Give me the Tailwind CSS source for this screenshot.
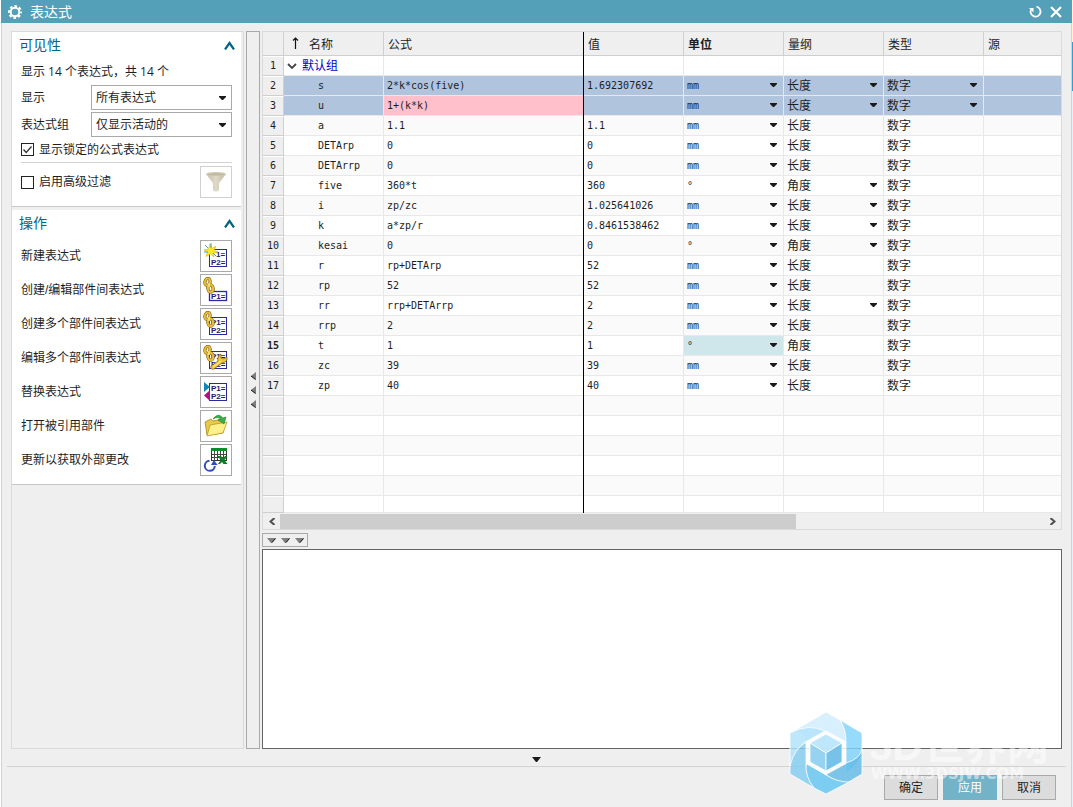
<!DOCTYPE html>
<html lang="zh-CN">
<head>
<meta charset="utf-8">
<title>表达式</title>
<script src="https://cdn.jsdelivr.net/npm/@tailwindcss/browser@4"></script>
</head>
<body class="bg-white font-['Liberation_Sans','Noto_Sans_CJK_SC',sans-serif] text-xs text-[#1e1e1e]">
<svg class="hidden">
  <defs>
    <symbol id="caret" viewBox="0 0 9 5"><path d="M1 0H8V1L5 4H4L1 1Z" fill="#1a1a1a"/></symbol>
    <symbol id="up" viewBox="0 0 11 9"><path d="M1 8.500 5.500 2 10 8.500" fill="none" stroke="#006684" stroke-width="2.200"/></symbol>
    <symbol id="gray-left" viewBox="0 0 5 8"><path d="M5 0V8L0 4Z" fill="#7d7d7d"/><path d="M0 4 4.500 7.500" fill="none" stroke="#111"/></symbol>
    <symbol id="gray-down" viewBox="0 0 9 5"><path d="M0 0H9L5 5H4Z" fill="#808080"/><path d="M8.500 .5 5 4.500" stroke="#111"/></symbol>
    <symbol id="chain" viewBox="0 0 12 17">
      <g fill="none" stroke="#7a5a00" stroke-width="3.200"><ellipse cx="4.500" cy="5" rx="2.500" ry="3.600" transform="rotate(14 4.500 5)"/><ellipse cx="7.500" cy="11.500" rx="2.600" ry="3.700" transform="rotate(-8 7.500 11.500)"/></g>
      <g fill="none" stroke="#e8bd3c" stroke-width="2"><ellipse cx="4.500" cy="5" rx="2.500" ry="3.600" transform="rotate(14 4.500 5)"/><ellipse cx="7.500" cy="11.500" rx="2.600" ry="3.700" transform="rotate(-8 7.500 11.500)"/></g>
      <path d="M6 6V10" stroke="#fae68c" stroke-width="1.500"/>
    </symbol>
  </defs>
</svg>

<div class="flex min-h-screen">
  <div class="w-px shrink-0 bg-white"></div>
  <div class="relative flex min-w-0 flex-1 flex-col border-x border-[#d2d2d2] bg-[#efefef]">
    <header class="-mx-px flex h-[23px] shrink-0 items-center bg-[#54a0b8] pl-1.5 pr-2.5 text-white">
      <svg class="mr-[7px] size-4" viewBox="0 0 16 16"><circle cx="8" cy="8" r="4.300" fill="none" stroke="#fff" stroke-width="2"/><circle cx="8" cy="8" r="6" fill="none" stroke="#fff" stroke-width="2" stroke-dasharray="2.700 2.012" stroke-dashoffset="1.350"/></svg>
      <h1 class="flex-1 text-sm">表达式</h1>
      <button aria-label="重置" class="mr-2"><svg class="size-[13px]" viewBox="0 0 13 13"><path d="M7.500 1.700A5 5 0 1 1 1.800 5" fill="none" stroke="#fff" stroke-width="1.800"/><path d="M0 3H4.500V7.500Z" fill="#fff"/></svg></button>
      <button aria-label="关闭"><svg class="size-3" viewBox="0 0 12 12"><path d="M1 1 11 11M11 1 1 11" stroke="#fff" stroke-width="2.200"/></svg></button>
    </header>

    <main class="flex flex-1 pl-[9px] pr-[9px] pt-2">
      <aside class="mr-0.5 w-[233px] shrink-0 border border-[#dadada]">
        <section class="mr-0.5 border-b border-[#c8c8c8] bg-white pb-2 pl-[9px] pr-[9px]">
          <div class="-ml-0.5 -mr-1 flex h-7 items-start justify-between pt-[3px] text-sm text-[#006684]"><h2>可见性</h2><button aria-label="折叠可见性" class="mr-px mt-1.5"><svg class="h-[9px] w-[11px]"><use href="#up"/></svg></button></div>
          <p class="flex h-6 items-center font-['Open_Sans','Noto_Sans_CJK_SC',sans-serif]">显示 14 个表达式，共 14 个</p>
          <div class="mt-px flex items-center">
            <label for="show" class="w-[70px]">显示</label>
            <div class="relative flex-1"><select id="show" class="block h-[25px] w-full appearance-none border border-[#a9a9a9] bg-white pl-1"><option>所有表达式</option></select><svg class="pointer-events-none absolute right-[5px] top-[11px] h-[5px] w-[9px]"><use href="#caret"/></svg></div>
          </div>
          <div class="mt-0.5 flex items-center">
            <label for="grp" class="w-[70px]">表达式组</label>
            <div class="relative flex-1"><select id="grp" class="block h-[25px] w-full appearance-none border border-[#a9a9a9] bg-white pl-1"><option>仅显示活动的</option></select><svg class="pointer-events-none absolute right-[5px] top-[11px] h-[5px] w-[9px]"><use href="#caret"/></svg></div>
          </div>
          <label class="flex h-[26px] items-center gap-[5px] border-b border-[#d2d2d2]">
            <span class="grid"><input type="checkbox" checked class="peer col-start-1 row-start-1 size-[13px] appearance-none border border-[#222]"><svg class="invisible pointer-events-none col-start-1 row-start-1 size-[13px] peer-checked:visible" viewBox="0 0 13 13"><path d="M2.500 6.500 5.200 9.500 10.500 3.500" fill="none" stroke="#333" stroke-width="1.300"/></svg></span>显示锁定的公式表达式</label>
          <div class="mt-[3px] flex items-center justify-between">
            <label class="flex items-center gap-[5px]"><input type="checkbox" class="size-[13px] appearance-none border border-[#222]">启用高级过滤</label>
            <button aria-label="高级过滤" class="border border-[#d0d0d0]"><svg class="size-[30px]" viewBox="0 0 30 30"><defs><linearGradient id="fn"><stop stop-color="#c5bda5"/><stop offset=".5" stop-color="#dfd9c8"/><stop offset="1" stop-color="#bdb69f"/></linearGradient></defs><path d="M5 7 12 16V23Q15 26 18 23V16L25 7Z" fill="url(#fn)"/><ellipse cx="15" cy="7" rx="10" ry="2" fill="#d0c9b3"/><ellipse cx="15" cy="7.200" rx="8" ry="1" fill="#bfb8a2"/></svg></button>
          </div>
        </section>
        <section class="mr-0.5 mt-[3px] border-b border-[#c8c8c8] bg-white pb-2 pl-[9px] pr-[9px]">
          <div class="-ml-0.5 -mr-1 mb-0.5 flex h-7 items-start justify-between pt-[3px] text-sm text-[#006684]"><h2>操作</h2><button aria-label="折叠操作" class="mr-px mt-1.5"><svg class="h-[9px] w-[11px]"><use href="#up"/></svg></button></div>
          <div id="ops" class="flex flex-col gap-0.5"></div>
        </section>
      </aside>

      <button aria-label="折叠面板" class="mr-0.5 flex w-3.5 shrink-0 flex-col items-center justify-center gap-1.5 border border-[#a9a9a9]">
        <svg class="h-2 w-[5px]"><use href="#gray-left"/></svg><svg class="h-2 w-[5px]"><use href="#gray-left"/></svg><svg class="h-2 w-[5px]"><use href="#gray-left"/></svg>
      </button>

      <div class="flex min-w-0 flex-1 flex-col">
        <div class="border border-[#dadada]">
          <table class="w-full table-fixed border-separate border-spacing-0 font-['DejaVu_Sans_Mono','Noto_Sans_CJK_SC',monospace] text-[10px] leading-4">
            <colgroup><col class="w-[21px]"><col class="w-[100px]"><col class="w-[200px]"><col class="w-[100px]"><col class="w-[100px]"><col class="w-[100px]"><col class="w-[100px]"><col></colgroup>
            <thead>
              <tr class="h-6 bg-[#efefef] text-left text-xs [&>th]:border-b [&>th]:border-r [&>th]:border-[#cfcfcf] [&>th]:p-0 [&>th]:pl-1 [&>th]:pt-0.5 [&>th]:font-normal">
                <th></th>
                <th><span class="flex items-center pl-1"><svg class="mb-1 mr-2.5 h-3 w-[7px]" viewBox="0 0 7 12"><path d="M3.500 12V1.500M1 3.500 3.500 1 6 3.500" fill="none" stroke="#111" stroke-width="1.200"/></svg>名称</span></th>
                <th class="relative after:absolute after:-right-px after:-bottom-px after:top-0 after:w-px after:bg-black">公式</th><th>值</th><th class="font-bold!">单位</th><th>量纲</th><th>类型</th><th class="border-r-0!">源</th>
              </tr>
            </thead>
            <tbody id="rows"></tbody>
          </table>
          <div class="flex h-4 items-center">
            <button aria-label="向左滚动" class="flex w-[17px] justify-center"><svg class="h-[7px] w-[6px]" viewBox="0 0 6 7"><path d="M5.500 0 1.500 3.500 5.500 7" fill="none" stroke="#505050" stroke-width="2"/></svg></button>
            <div class="h-full flex-1"><div class="mt-px h-[15px] w-[67.500%] bg-[#cdcdcd]"></div></div>
            <button aria-label="向右滚动" class="flex w-[17px] justify-center"><svg class="h-[7px] w-[6px]" viewBox="0 0 6 7"><path d="M.5 0 4.500 3.500 .5 7" fill="none" stroke="#505050" stroke-width="2"/></svg></button>
          </div>
        </div>
        <button aria-label="展开编辑区" class="mb-0.5 mt-[3px] flex h-3.5 w-[46px] shrink-0 items-center justify-center gap-[5px] border border-[#a9a9a9]">
          <svg class="h-[5px] w-[9px]"><use href="#gray-down"/></svg><svg class="h-[5px] w-[9px]"><use href="#gray-down"/></svg><svg class="h-[5px] w-[9px]"><use href="#gray-down"/></svg>
        </button>
        <textarea aria-label="公式编辑" class="block min-h-40 w-full flex-1 resize-none border border-[#646464] bg-white"></textarea>
      </div>
    </main>

    <footer class="px-[5px]">
      <button aria-label="更多选项" class="flex h-[17px] w-full items-center justify-center pt-1"><svg class="h-[5px] w-[9px]" viewBox="0 0 9 5"><path d="M0 0H9L5 5H4Z" fill="#1a1a1a"/></svg></button>
      <div class="flex justify-end gap-[5px] border-t border-[#d2d2d2] pb-[7px] pr-2.5 pt-2">
        <button class="h-[25px] w-[54px] border border-[#a9a9a9] bg-[#dcdcdc]">确定</button>
        <button class="h-[25px] w-[54px] bg-[#72b3c8] text-white">应用</button>
        <button class="h-[25px] w-[54px] border border-[#a9a9a9] bg-[#dcdcdc]">取消</button>
      </div>
    </footer>

    <svg class="pointer-events-none absolute bottom-3 right-5 h-[84px] w-[264px]" viewBox="0 0 264 84" aria-hidden="true">
      <g stroke="#fff" stroke-opacity=".8" fill-opacity=".82">
        <path d="M3 22 39 1 53 9Q59 18 59 31L39 20 20 31Q15 18 3 22Z" fill="#d0edfc"/>
        <path d="M53 9 75 22V40Q73 54 59 62V31Q59 18 53 9Z" fill="#7fd3fa"/>
        <path d="M75 38V63L60 72Q47 70 38 63L59 52Q73 48 75 38Z" fill="#63bce8"/>
        <path d="M62 71 39 83 27 77Q17 66 19 52L39 64Q50 71 62 71Z" fill="#64c6f3"/>
        <path d="M27 77 3 63V52Q6 38 19 31V52Q18 66 27 77Z" fill="#82cdf1"/>
        <path d="M3 55V22Q22 12 38 20L20 30Q7 38 3 55Z" fill="#b1e2fa"/>
        <path d="M39 20 59 31V53L39 64 19 53V31Z" fill="#fff" stroke="none"/>
        <path d="M39 23 55 32 39 42 23 32Z" fill="#b1e2fa"/><path d="M23 32 39 42V60L23 51Z" fill="#7ec9ed"/><path d="M55 32 39 42V60L55 51Z" fill="#58b5e4"/>
      </g>
      <g fill="#fff" fill-opacity=".5" font-weight="bold">
        <text x="82" y="49" font-size="42" font-family="Liberation Sans, Noto Sans CJK SC, sans-serif">3D世界网</text>
        <text x="84" y="68" font-size="15" font-family="DejaVu Sans, sans-serif">WWW.3DSJW.COM</text>
      </g>
    </svg>
  </div>
  <div class="flex w-px shrink-0 flex-col"><div class="h-[42px] bg-[#fdf3d0]"></div><div class="h-[49px] bg-[#2a9fd8]"></div><div class="flex-1 bg-[#e6f2fa]"></div></div>
</div>

<script>
const box = '<rect x="9.500" y="9.500" width="17" height="17" fill="#fff" stroke="#2a2aa0"/>';
const txt = (x, y, t) => `<text x="${x}" y="${y}" font-size="8" font-weight="bold" fill="#20206e" font-family="Liberation Sans, sans-serif">${t}</text>`;
const chain = '<use href="#chain" x="3" y="3" width="12" height="17"/>';
const ops = [
  ['新建表达式', box + txt(16, 17, '1=') + txt(11, 25, 'P2=') +
    '<path d="M10 4 12 8.500 16 6 14 10.500 18 12 13.500 13 14 17 10.500 14 6 16.500 7.500 12 4 10 8.500 9Z" fill="#ffe91f" stroke="#d0b400" stroke-width=".6"/><path d="M5 5 8 8M11 3V8M16 16 13 13M4 12H8" stroke="#3ba7c9"/>'],
  ['创建/编辑部件间表达式', '<rect x="9.500" y="17.500" width="17" height="9" fill="#fff" stroke="#2a2aa0" stroke-width="1.300"/>' + txt(11, 25, 'P1=') + chain],
  ['创建多个部件间表达式', box + txt(11, 17, 'P1=') + txt(11, 25, 'P2=') + chain],
  ['编辑多个部件间表达式', box + txt(11, 17, 'P1=') + txt(11, 25, 'P2=') + chain +
    '<path d="M11 24 18 19Q17 14 21 12V16L24 17 27 15Q28 20 22 21L14 27Q10 28 11 24Z" fill="#f2c840" stroke="#8a6508" stroke-width=".8"/><path d="M13 25 21 19" stroke="#fff0a0"/>'],
  ['替换表达式', '<rect x="9.500" y="7.500" width="17" height="17" fill="#fff" stroke="#2a2aa0"/>' + txt(11, 15, 'P1=') + txt(11, 23, 'P2=') +
    '<path d="M4 6 10 11 4 16Z" fill="#1287b5"/><path d="M10 14V25L4 19.500Z" fill="#b0108a"/>'],
  ['打开被引用部件', '<path d="M5 12 11 9 13 11 23 9V23L7 25Z" fill="#e8c94a" stroke="#a88612" stroke-width=".8"/><path d="M10 15 27 12 23 23 7 26Z" fill="#fff08a" stroke="#b89a20" stroke-width=".8"/><path d="M13 9Q18 2 23 8L26 7 24 14 18 10 20.500 9Q18 6 13 9Z" fill="#3fae49" stroke="#1d7a2c" stroke-width=".6"/>'],
  ['更新以获取外部更改', '<rect x="11.500" y="5.500" width="15" height="11" fill="#fff" stroke="#333"/><path d="M14.500 6V16M17.500 6V16M20.500 6V16M23.500 6V16M12 10.500H26M12 13.500H26" stroke="#444"/><path d="M11 4H27V7H11Z" fill="#118a22"/><path d="M17 12H21L23 14.500 25 12H27V13L24.500 16 27.500 20H23.500L22 18 20 20H18L21 16Z" fill="#0d7c24"/><path d="M9.500 16.800A5 5 0 1 0 14.800 22" fill="none" stroke="#2f4fb4" stroke-width="2"/><path d="M11 21 14 16 17.500 21Z" fill="#2f4fb4"/>']
];
document.getElementById('ops').innerHTML = ops.map(([n, g], i) =>
  `<div class="flex items-center justify-between"><label for="op${i}">${n}</label><button id="op${i}" class="border border-[#a9a9a9] bg-white"><svg class="size-[30px]" viewBox="1 1 30 30">${g}</svg></button></div>`).join('');

// name, formula, value, unit, dimension, dimension has a menu
const data = [
  ['s','2*k*cos(five)','1.692307692','mm','长度',1],['u','1+(k*k)','','mm','长度',1],['a','1.1','1.1','mm','长度',0],
  ['DETArp','0','0','mm','长度',0],['DETArrp','0','0','mm','长度',0],['five','360*t','360','°','角度',1],
  ['i','zp/zc','1.025641026','mm','长度',1],['k','a*zp/r','0.8461538462','mm','长度',1],['kesai','0','0','°','角度',1],
  ['r','rp+DETArp','52','mm','长度',0],['rp','52','52','mm','长度',0],['rr','rrp+DETArrp','2','mm','长度',1],
  ['rrp','2','2','mm','长度',0],['t','1','1','°','角度',0],['zc','39','39','mm','长度',0],['zp','40','40','mm','长度',0]
];
const caret = '<svg class="h-[5px] w-[9px]"><use href="#caret"/></svg>';
const menu = (t, on) => on ? `<button class="flex w-full items-center justify-between pr-[5px]"><span>${t}</span>${caret}</button>` : t;
const idx = (n, b) => `<td class="border-b border-r border-[#cfcfcf] border-t border-t-white bg-[#efefef] p-0 text-center ${b ? 'font-bold' : ''}">${n}</td>`;
const row = (i, cells, bg, h) => `<tr class="${h || 'h-5'} ${bg}">${idx(i, i === 15)}${cells.map((c, k) =>
  `<td class="whitespace-nowrap border-b border-[#e8e8e8] p-0 ${k === 6 ? '' : 'border-r'} ${k === 1 ? 'relative after:absolute after:-right-px after:-bottom-px after:top-0 after:w-px after:bg-black' : ''} ${c[1] || 'pl-[3px]'}">${c[0]}</td>`).join('')}</tr>`;
const blank = () => Array.from({length: 7}, () => ['']);
let first = blank();
first[0] = ['<button class="flex items-center gap-[5px] text-xs leading-4 text-[#0000d0]"><svg class="h-1.5 w-2.5" viewBox="0 0 10 6"><path d="M1 1 5 5 9 1" fill="none" stroke="#444" stroke-width="1.800"/></svg>默认组</button>'];
let html = row(1, first, 'bg-white');
data.forEach((d, k) => {
  const n = k + 2, sel = n < 4;
  html += row(n, [[d[0], 'pl-[34px]'], [d[1], n === 3 ? 'pl-[3px] bg-[#ffc0cb]' : ''], [d[2]],
    [menu(d[3], 1), n === 15 ? 'pl-[3px] bg-[#cfe6ea]' : ''], [menu(d[4], d[5]), 'pl-[3px] text-xs leading-4'], [menu('数字', sel), 'pl-[3px] text-xs leading-4'], ['']],
    sel ? 'bg-[#b0c4de]' : n % 2 ? 'bg-white' : 'bg-[#fafafa]');
});
for (let k = 0; k < 6; k++) html += row('', blank(), k % 2 ? 'bg-white' : 'bg-[#fafafa]', k === 5 ? 'h-[17px]' : 'h-5');
document.getElementById('rows').innerHTML = html;
</script>
</body>
</html>
